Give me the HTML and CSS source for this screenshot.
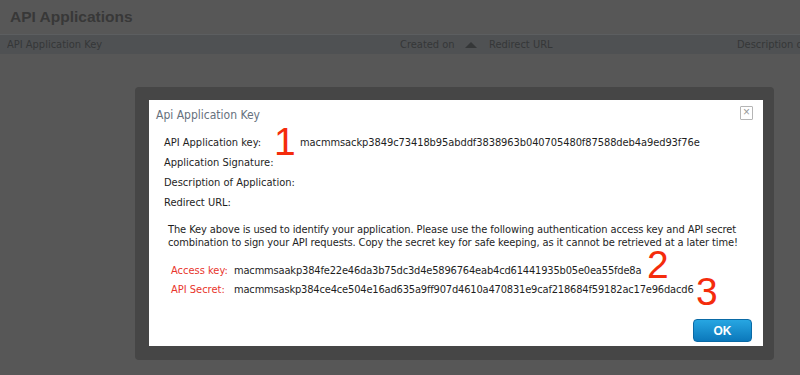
FILE: index.html
```html
<!DOCTYPE html>
<html>
<head>
<meta charset="utf-8">
<link rel="stylesheet" href="styles.css">
</head>
<body>
<div class="page">
  <h1 class="page-title">API Applications</h1>
  <div class="grid-head">
    <div class="cell">API Application Key</div>
    <div class="cell sort">Created on <span class="tri"></span></div>
    <div class="cell">Redirect URL</div>
    <div class="cell">Description of Application</div>
  </div>
</div>

<div class="dialog">
  <div class="dialog-body">
    <div class="dialog-title">
      <span>Api Application Key</span>
      <span class="close">&#215;</span>
    </div>
    <div class="info">
      <div class="lbl">API Application key:</div><div class="val">macmmsackp3849c73418b95abddf3838963b040705480f87588deb4a9ed93f76e</div>
      <div class="lbl">Application Signature:</div><div class="val"></div>
      <div class="lbl">Description of Application:</div><div class="val"></div>
      <div class="lbl">Redirect URL:</div><div class="val"></div>
    </div>
    <p class="note">The Key above is used to identify your application. Please use the following authentication access key and API secret combination to sign your API requests. Copy the secret key for safe keeping, as it cannot be retrieved at a later time!</p>
    <div class="keys">
      <div class="klbl">Access key:</div><div class="kval">macmmsaakp384fe22e46da3b75dc3d4e5896764eab4cd61441935b05e0ea55fde8a</div>
      <div class="klbl">API Secret:</div><div class="kval">macmmsaskp384ce4ce504e16ad635a9ff907d4610a470831e9caf218684f59182ac17e96dacd6</div>
    </div>
    <div class="actions"><button class="ok">OK</button></div>
    <span class="mark m1">1</span>
    <span class="mark m2">2</span>
    <span class="mark m3">3</span>
  </div>
</div>
</body>
</html>
```
FILE: styles.css
```css
html, body {
  margin: 0;
  padding: 0;
}
body {
  background: #575757;
  width: 800px;
  height: 375px;
  overflow: hidden;
  position: relative;
  font-family: "DejaVu Sans Condensed", "DejaVu Sans", sans-serif;
}
.page-title {
  margin: 0;
  height: 34px;
  padding-left: 10px;
  box-sizing: border-box;
  font-family: "Liberation Sans", Arial, sans-serif;
  font-weight: bold;
  font-size: 15.5px;
  line-height: 34px;
  color: #383838;
}
.grid-head {
  display: grid;
  grid-template-columns: 393px 89px 248px 1fr;
  padding-left: 7px;
  height: 19px;
  background: #4f5153;
  border-top: 1px solid #5c5e60;
  white-space: nowrap;
  overflow: hidden;
}
.cell {
  font-size: 11px;
  line-height: 19px;
  color: #353738;
  overflow: hidden;
}
.sort {
  display: flex;
  align-items: center;
}
.tri {
  margin-left: 10px;
  width: 0;
  height: 0;
  border-left: 6px solid transparent;
  border-right: 6px solid transparent;
  border-bottom: 6px solid #353738;
}
.dialog {
  position: absolute;
  left: 135px;
  top: 87px;
  width: 639px;
  height: 273px;
  box-sizing: border-box;
  padding: 13px 11px 14px 14px;
  background: #464646;
  border-radius: 4px;
}
.dialog-body {
  position: relative;
  background: #fff;
  height: 246px;
  display: flex;
  flex-direction: column;
  color: #1e1e1e;
  font-size: 11px;
}
.dialog-title {
  display: flex;
  justify-content: space-between;
  align-items: flex-start;
  padding: 6px 10px 0 7px;
  height: 22px;
  box-sizing: border-box;
}
.dialog-title span:first-child {
  margin-top: 2px;
  font-size: 12px;
  line-height: 14px;
  color: #66717d;
}
.close {
  width: 11px;
  height: 12px;
  border: 1px solid #b5b5b5;
  border-radius: 1px;
  font-size: 12px;
  line-height: 11px;
  text-align: center;
  color: #999;
  font-family: "Liberation Sans", sans-serif;
}
.info {
  display: grid;
  grid-template-columns: 136px 1fr;
  padding-left: 15px;
  margin-top: 11px;
  line-height: 20px;
  white-space: nowrap;
}
.val {
  letter-spacing: -0.08px;
}
.note {
  margin: 10px 0 0 19px;
  width: 582px;
  line-height: 13px;
  letter-spacing: -0.1px;
}
.keys {
  display: grid;
  grid-template-columns: 63px 1fr;
  padding-left: 22px;
  margin-top: 12px;
  line-height: 19px;
  white-space: nowrap;
}
.kval {
  letter-spacing: -0.17px;
}
.klbl {
  color: #e8352b;
}
.actions {
  margin-top: auto;
  display: flex;
  justify-content: flex-end;
  padding: 0 11px 4px 0;
}
.ok {
  width: 59px;
  height: 23px;
  border: 1px solid #0a6aa6;
  border-radius: 4px;
  background: linear-gradient(#27a6e2, #0b78bb);
  color: #fff;
  font-family: "Liberation Sans", sans-serif;
  font-weight: bold;
  font-size: 12px;
  padding: 0;
}
.mark {
  position: absolute;
  font-family: "Liberation Sans", Arial, sans-serif;
  font-size: 39px;
  line-height: 1;
  color: #f42c0c;
}
.m1 { left: 125px; top: 22px; }
.m2 { left: 498px; top: 145px; }
.m3 { left: 547px; top: 172px; }
```
